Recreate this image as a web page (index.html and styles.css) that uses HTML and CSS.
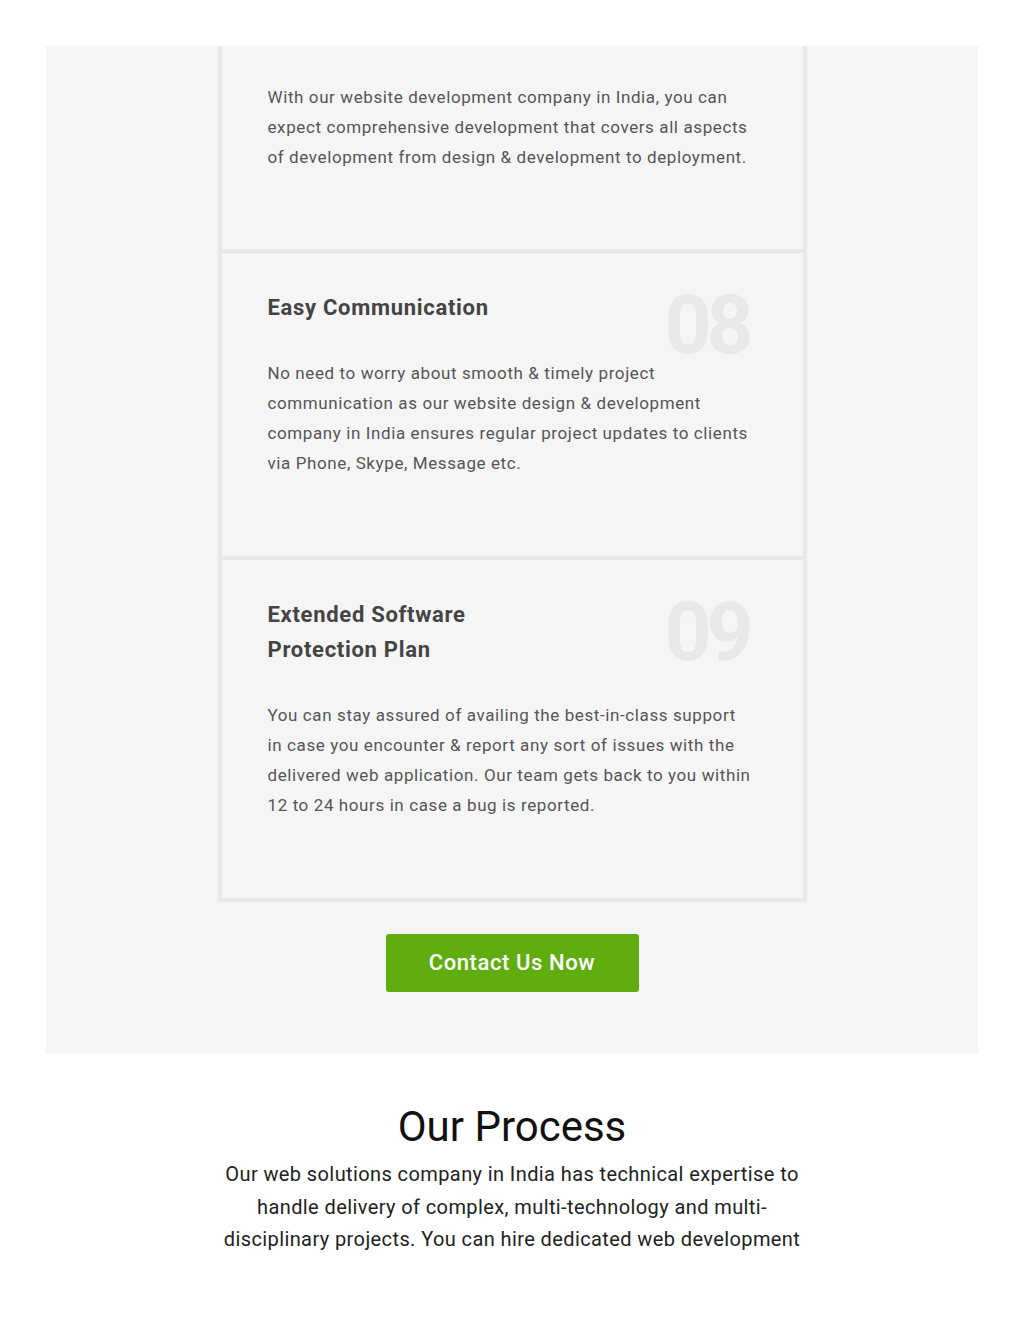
FILE: index.html
```html
<!DOCTYPE html>
<html lang="en">

<head>
    <meta charset="UTF-8">
    <meta name="viewport" content="width=device-width, initial-scale=1.0">
    <title>Why Choose Us</title>
    <link rel="stylesheet" href="styles.css">
</head>

<body>
    <section class="features">
        <div class="card-list">
            <div class="card card-first">
                <p>With our website development company in India, you can expect comprehensive development that covers all aspects of development from design &amp; development to deployment.</p>
            </div>
            <div class="card">
                <div class="card-head">
                    <h3>Easy Communication</h3>
                    <span class="num">08</span>
                </div>
                <p>No need to worry about smooth &amp; timely project communication as our website design &amp; development company in India ensures regular project updates to clients via Phone, Skype, Message etc.</p>
            </div>
            <div class="card">
                <div class="card-head">
                    <h3>Extended Software Protection Plan</h3>
                    <span class="num">09</span>
                </div>
                <p>You can stay assured of availing the best-in-class support in case you encounter &amp; report any sort of issues with the delivered web application. Our team gets back to you within 12 to 24 hours in case a bug is reported.</p>
            </div>
        </div>
        <a class="btn" href="#">Contact Us Now</a>
    </section>

    <section class="process">
        <h2>Our Process</h2>
        <p>Our web solutions company in India has technical expertise to handle delivery of complex, multi-technology and multi-disciplinary projects. You can hire dedicated web development</p>
    </section>
</body>

</html>
```

FILE: styles.css
```css
body {
    font-family: Roboto, "Noto Sans", sans-serif;
    margin: 0;
    padding: 46px 46px 0;
    background-color: #fff;
}

.features {
    background-color: #f5f5f5;
    padding-bottom: 62px;
    display: flex;
    flex-direction: column;
    align-items: center;
}

.card-list {
    width: 589px;
    margin-bottom: 32px;
}

.card {
    border: 4px solid #e8e8e8;
    margin-top: -4px;
    padding: 37px 50px 78px 46px;
}

.card-first {
    border-top: none;
    margin-top: 0;
    padding-top: 36px;
    padding-bottom: 77px;
}

.card-head {
    position: relative;
    margin-bottom: 33px;
}

.card h3 {
    margin: 0;
    max-width: 260px;
    font-size: 22px;
    line-height: 35px;
    font-weight: 700;
    letter-spacing: 0.7px;
    color: #444;
}

.num {
    position: absolute;
    top: 5px;
    right: 4px;
    font-size: 82px;
    line-height: 0.75;
    font-weight: 700;
    letter-spacing: -5px;
    color: #e8e8e8;
}

.card p {
    margin: 0;
    font-size: 17px;
    line-height: 30px;
    color: #555;
    letter-spacing: 0.6px;
}

.btn {
    display: block;
    width: 253px;
    padding: 14px 0;
    text-align: center;
    background-color: #5fad0f;
    color: #fff;
    font-size: 22px;
    line-height: 30px;
    font-weight: 500;
    letter-spacing: 0.6px;
    text-decoration: none;
    border-radius: 3px;
}

.process {
    text-align: center;
    padding-top: 48px;
}

.process h2 {
    margin: 0 0 6px;
    font-size: 42px;
    line-height: 50px;
    font-weight: 400;
    color: #111;
}

.process p {
    max-width: 590px;
    margin: 0 auto;
    font-size: 20px;
    line-height: 32.5px;
    letter-spacing: 0.4px;
    color: #222;
}
```
